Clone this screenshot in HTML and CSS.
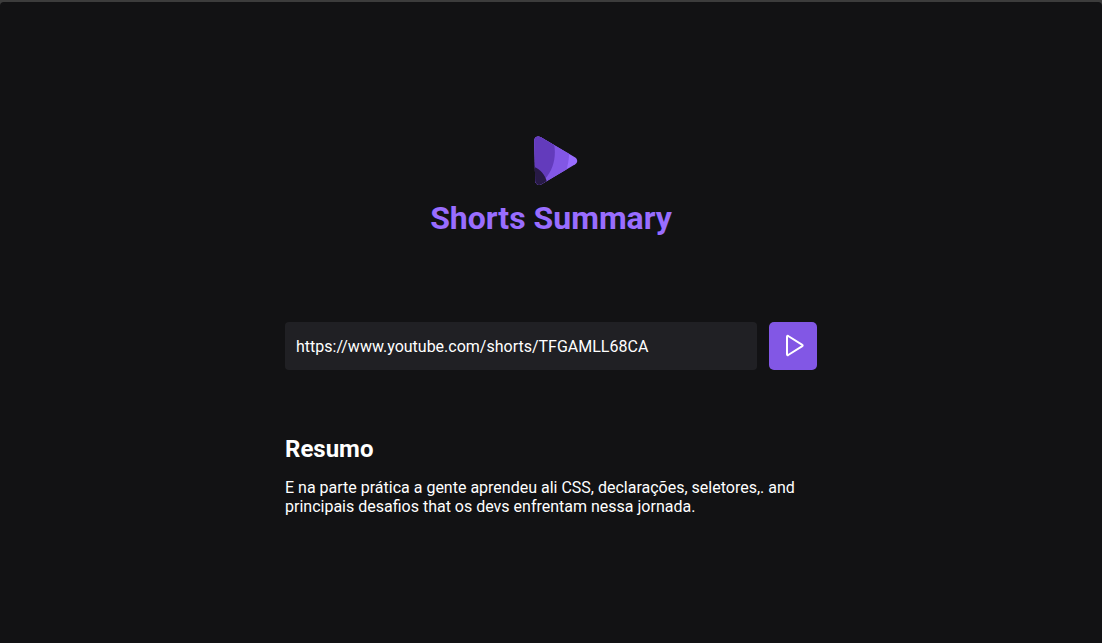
FILE: index.html
```html
<!DOCTYPE html>
<html lang="pt-BR">
<head>
<meta charset="UTF-8">
<meta name="viewport" content="width=device-width, initial-scale=1">
<title>Shorts Summary</title>
<link rel="stylesheet" href="styles.css">
</head>
<body>
<div class="page">
  <main class="container">
    <header class="header">
      <svg class="logo" viewBox="0 0 64 50" aria-hidden="true">
        <defs>
          <clipPath id="play">
            <path d="M15.300 4.4C15.300 1.2 18.600-.4 21.500 1.100L56.300 21.600C58.800 23.200 58.800 26.700 56.300 28.200L22.500 48.300C19.400 50 16.300 48.200 16.200 45Z"/>
          </clipPath>
        </defs>
        <g clip-path="url(#play)">
          <path fill="#996dff" d="M0 0h64v50H0z"/>
          <path fill="#8257e5" d="M0 0h49.500C51.500 19 50 30 42 50H0z"/>
          <path fill="#633bbc" d="M0 0h33C38 14 37 31 25.500 43.500L0 50z"/>
          <path fill="#271a45" d="M0 31h15.500C21 33 26 38.500 28 46L30 50H0z"/>
        </g>
      </svg>
      <h1 class="title">Shorts Summary</h1>
    </header>
    <form class="form">
      <input class="url" type="text" aria-label="URL do vídeo" value="https://www.youtube.com/shorts/TFGAMLL68CA" spellcheck="false">
      <button class="submit" type="button" aria-label="Resumir">
        <svg class="submit-icon" viewBox="0 0 24 24" aria-hidden="true">
          <path d="M6 2.700v17.600c0 .7.600 1 1.200.700L21.300 12.100c.5-.3.500-.9 0-1.200L7.200 2c-.6-.3-1.200 0-1.200.7Z"/>
        </svg>
      </button>
    </form>
    <section class="summary">
      <h2 class="subtitle">Resumo</h2>
      <p class="text">E na parte prática a gente aprendeu ali CSS, declarações, seletores,. and principais desafios that os devs enfrentam nessa jornada.</p>
    </section>
  </main>
</div>
</body>
</html>
```
FILE: styles.css
```css
* {
  box-sizing: border-box;
  margin: 0;
  padding: 0;
}

body {
  min-height: 100vh;
  padding-top: 2px;
  display: flex;
  background: #3c3c3c;
  color: #fff;
  font-family: Roboto, sans-serif;
  font-size: 16px;
}

.page {
  flex: 1;
  display: flex;
  justify-content: center;
  align-items: center;
  padding: 22px 16px 16px;
  border-radius: 4px 4px 0 0;
  background: #121214;
}

.container {
  width: 100%;
  max-width: 532px;
}

.header {
  display: flex;
  flex-direction: column;
  align-items: center;
  gap: 13px;
}

.logo {
  display: block;
  width: 64px;
  height: 50px;
}

.title {
  color: #996dff;
  font-size: 32px;
  font-weight: 700;
  line-height: 38px;
}

.form {
  display: flex;
  gap: 12px;
  margin: 85px 0 64px;
}

.url {
  flex: 1;
  min-width: 0;
  height: 48px;
  padding: 2px 11px 0;
  border: 0;
  border-radius: 4px;
  outline: 0;
  background: #202024;
  color: #fff;
  font: inherit;
}

.submit {
  display: grid;
  place-items: center;
  width: 48px;
  height: 48px;
  border: 0;
  border-radius: 5px;
  background: #8257e5;
  cursor: pointer;
}

.submit-icon {
  width: 24px;
  height: 24px;
  fill: none;
  stroke: #fff;
  stroke-width: 2;
}

.subtitle {
  margin-bottom: 14px;
  font-size: 24px;
  font-weight: 700;
  line-height: 30px;
}

.text {
  line-height: 19px;
}
```
